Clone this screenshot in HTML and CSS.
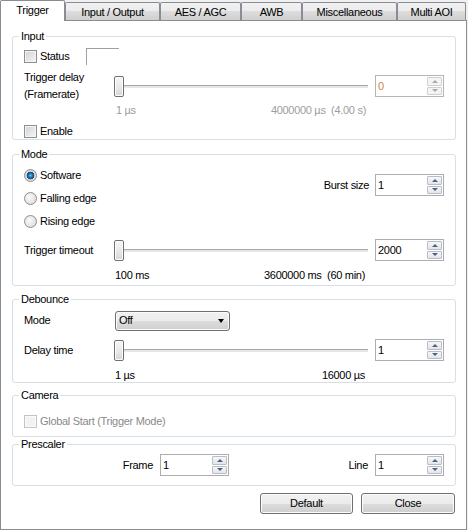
FILE: index.html
```html
<!DOCTYPE html>
<html>
<head>
<meta charset="utf-8">
<link rel="stylesheet" href="styles.css">
</head>
<body>
<div class="tabs">
  <div class="tab sel w65">Trigger</div>
  <div class="tab w95">Input / Output</div>
  <div class="tab w81">AES / AGC</div>
  <div class="tab w61">AWB</div>
  <div class="tab w95">Miscellaneous</div>
  <div class="tab w69">Multi AOI</div>
</div>
<div class="panel">
  <fieldset class="grp">
    <legend>Input</legend>
    <div class="gbody">
      <div class="row r-status">
        <span class="chkl"><span class="chk"></span>Status</span>
        <span class="statusbox"></span>
      </div>
      <div class="row r-trig">
        <div class="lbl two">Trigger delay<br>(Framerate)</div>
        <div class="slider"><span class="thumb"></span><span class="track"></span></div>
        <div class="spin dis"><span class="val">0</span><span class="btns"><span class="up"></span><span class="dn"></span></span></div>
      </div>
      <div class="scale dis"><span>1 µs</span><span>4000000 µs&nbsp; (4.00 s)</span></div>
      <div class="row r-en"><span class="chk"></span>Enable</div>
    </div>
  </fieldset>

  <fieldset class="grp g-mode">
    <legend>Mode</legend>
    <div class="gbody b-mode">
      <div class="mode-top">
        <div class="radios">
          <div class="rad-row"><span class="radio on"></span>Software</div>
          <div class="rad-row"><span class="radio"></span>Falling edge</div>
          <div class="rad-row"><span class="radio"></span>Rising edge</div>
        </div>
        <div class="burst">
          <span>Burst size</span>
          <div class="spin"><span class="val">1</span><span class="btns"><span class="up"></span><span class="dn"></span></span></div>
        </div>
      </div>
      <div class="row r-tt">
        <div class="lbl">Trigger timeout</div>
        <div class="slider"><span class="thumb"></span><span class="track"></span></div>
        <div class="spin"><span class="val">2000</span><span class="btns"><span class="up"></span><span class="dn"></span></span></div>
      </div>
      <div class="scale s-mode"><span>100 ms</span><span>3600000 ms&nbsp; (60 min)</span></div>
    </div>
  </fieldset>

  <fieldset class="grp g-deb">
    <legend>Debounce</legend>
    <div class="gbody">
      <div class="row r-dm">
        <div class="lbl w91">Mode</div>
        <div class="combo"><span>Off</span><span class="arrow"></span></div>
      </div>
      <div class="row r-dt">
        <div class="lbl">Delay time</div>
        <div class="slider"><span class="thumb"></span><span class="track"></span></div>
        <div class="spin"><span class="val">1</span><span class="btns"><span class="up"></span><span class="dn"></span></span></div>
      </div>
      <div class="scale s-deb"><span>1 µs</span><span>16000 µs</span></div>
    </div>
  </fieldset>

  <fieldset class="grp g-cam">
    <legend>Camera</legend>
    <div class="gbody b-cam">
      <div class="row r-cam"><span class="chk dis"></span>Global Start (Trigger Mode)</div>
    </div>
  </fieldset>

  <fieldset class="grp g-pre">
    <legend>Prescaler</legend>
    <div class="b-pre">
      <div class="cell">
        <span>Frame</span>
        <div class="spin"><span class="val">1</span><span class="btns"><span class="up"></span><span class="dn"></span></span></div>
      </div>
      <div class="cell">
        <span>Line</span>
        <div class="spin"><span class="val">1</span><span class="btns"><span class="up"></span><span class="dn"></span></span></div>
      </div>
    </div>
  </fieldset>

  <div class="btnrow">
    <div class="btn b-def">Default</div>
    <div class="btn b-close">Close</div>
  </div>
</div>
</body>
</html>
```
FILE: styles.css
```css
html, body {
  margin: 0;
  padding: 0;
}
body {
  width: 468px;
  height: 530px;
  overflow: hidden;
  background: #f0f0f0;
  font-family: "Liberation Sans", Arial, sans-serif;
  font-size: 11px;
  line-height: 13px;
  letter-spacing: -0.3px;
  color: #000;
}

/* tabs */
.tabs {
  display: flex;
  align-items: flex-end;
  height: 20px;
  position: relative;
  z-index: 1;
}
.tab {
  box-sizing: border-box;
  height: 18px;
  border: 1px solid #898c95;
  border-bottom: none;
  border-radius: 2px 2px 0 0;
  background: linear-gradient(#f2f2f2, #ebebeb 50%, #dddddd 50%, #cfcfcf);
  text-align: center;
  line-height: 18px;
  white-space: nowrap;
}
.tab.sel {
  height: 21px;
  margin-bottom: -1px;
  background: #fff;
  line-height: 19px;
}
.w65 { width: 65px; }
.w95 { width: 95px; }
.w81 { width: 81px; }
.w61 { width: 61px; }
.w69 { width: 69px; }

/* panel */
.panel {
  box-sizing: border-box;
  width: 467px;
  height: 510px;
  border: 1px solid #898c95;
  background: #fff;
  padding: 9px 10px 0 11px;
}

/* group boxes */
.grp {
  margin: 0;
  padding: 0;
  border: 1px solid #d5dfe5;
  border-radius: 3px;
  min-inline-size: 0;
}
.grp legend {
  padding: 0 2px;
  margin-left: 6px;
  line-height: 13px;
}
.gbody {
  padding: 0 11px;
}
.g-mode { margin-top: 8px; }
.g-deb { margin-top: 7px; }
.g-cam { margin-top: 6px; }
.g-pre { margin-top: 1px; }

.row {
  display: flex;
  align-items: center;
}
.lbl {
  width: 90px;
  flex: none;
  white-space: nowrap;
}
.lbl.two { line-height: 17px; }
.lbl.w91 { width: 91px; }

/* checkbox */
.chk {
  box-sizing: border-box;
  flex: none;
  width: 13px;
  height: 13px;
  margin-right: 3px;
  border: 1px solid #8e8f8f;
  background: linear-gradient(135deg, #cfd1d4, #f7f7f7);
  box-shadow: inset 0 0 0 1px #f4f4f4;
}
.chk.dis {
  border-color: #c4c4c4;
  background: #f2f2f2;
  box-shadow: inset 0 0 0 1px #fafafa;
}
.chkl {
  display: flex;
  align-items: center;
  width: 62px;
}
.statusbox {
  box-sizing: border-box;
  width: 33px;
  height: 17px;
  border-top: 1px solid #a0a0a0;
  border-left: 1px solid #a0a0a0;
}

.r-status { margin-top: 4px; height: 18px; }
.r-trig { margin-top: 4px; height: 34px; }
.r-en { margin-top: 6px; height: 16px; }

/* slider */
.slider {
  display: flex;
  align-items: center;
  flex: none;
  width: 254px;
  height: 21px;
}
.thumb {
  box-sizing: border-box;
  flex: none;
  width: 10px;
  height: 21px;
  border: 1px solid #707070;
  border-radius: 2px;
  background: linear-gradient(#f7f7f7, #e6e6e6 60%, #d6d6d6);
  box-shadow: inset 0 0 0 1px #fdfdfd;
}
.track {
  box-sizing: border-box;
  flex: 1;
  height: 3px;
  border-top: 1px solid #a7a7a7;
  background: #e4e8e9;
}

/* spin box */
.spin {
  box-sizing: border-box;
  display: flex;
  flex: none;
  width: 69px;
  height: 22px;
  margin-left: 7px;
  border: 1px solid #abadb3;
  background: #fff;
}
.spin .val {
  flex: 1;
  padding-left: 2px;
  line-height: 20px;
}
.spin.dis { border-color: #b5b5b5; }
.spin.dis .val { color: #c8883c; }
.btns {
  display: flex;
  flex-direction: column;
  gap: 1px;
  width: 15px;
  margin: 1px 1px 1px 0;
}
.btns span {
  box-sizing: border-box;
  flex: 1;
  display: flex;
  align-items: center;
  justify-content: center;
  border: 1px solid #b8bdc6;
  border-radius: 1px;
  background: linear-gradient(#f7f7f7, #e3e5e9);
}
.btns .up::after {
  content: "";
  border-left: 3px solid transparent;
  border-right: 3px solid transparent;
  border-bottom: 3px solid #4d6089;
}
.btns .dn::after {
  content: "";
  border-left: 3px solid transparent;
  border-right: 3px solid transparent;
  border-top: 3px solid #4d6089;
}
.spin.dis .btns span { border-color: #d0d0d0; background: #f4f4f4; }
.spin.dis .btns .up::after { border-bottom-color: #a8a8a8; }
.spin.dis .btns .dn::after { border-top-color: #a8a8a8; }

/* scale labels */
.scale {
  box-sizing: border-box;
  display: flex;
  justify-content: space-between;
  width: 254px;
  height: 14px;
  margin-left: 90px;
  padding: 0 2px 0 2px;
  line-height: 14px;
  white-space: nowrap;
}
.scale.dis { color: #9d9d9d; }
.s-mode { margin-top: 7px; padding-left: 1px; padding-right: 3px; }
.s-deb { margin-top: 8px; height: 13px; line-height: 13px; padding-left: 1px; padding-right: 3px; }

/* mode group */
.b-mode { padding-bottom: 3px; }
.mode-top {
  display: flex;
  justify-content: space-between;
  align-items: flex-start;
  padding-top: 3px;
}
.rad-row {
  display: flex;
  align-items: center;
  height: 23px;
}
.radio {
  box-sizing: border-box;
  flex: none;
  width: 13px;
  height: 13px;
  margin-right: 3px;
  border: 1px solid #8e8f8f;
  border-radius: 50%;
  background: radial-gradient(circle at 40% 40%, #fbfbfb, #e4e4e4 60%, #cfcfcf);
}
.radio.on {
  background: radial-gradient(circle at 50% 50%, #6cc6f2 0, #2b86c6 1.5px, #1a5587 3px, #2a4f74 3.6px, #e8e8e8 4.2px, #d2d2d2 5.5px);
}
.burst {
  display: flex;
  align-items: center;
  margin-top: 10px;
}
.burst .spin { margin-left: 6px; }
.r-tt { margin-top: 6px; height: 22px; }

/* debounce */
.r-dm { margin-top: 4px; height: 21px; }
.r-dt { margin-top: 8px; height: 22px; }
.combo {
  box-sizing: border-box;
  display: flex;
  align-items: center;
  justify-content: space-between;
  width: 115px;
  height: 20px;
  padding: 0 5px 0 3px;
  border: 1px solid #707070;
  border-radius: 3px;
  background: linear-gradient(#f2f2f2, #ebebeb 50%, #dddddd 50%, #cfcfcf);
  box-shadow: inset 0 0 0 1px #fafafa;
}
.arrow {
  border-left: 3.5px solid transparent;
  border-right: 3.5px solid transparent;
  border-top: 4px solid #000;
}

/* camera */
.b-cam { padding-bottom: 7px; }
.r-cam { margin-top: 11px; height: 16px; color: #8a8a8a; }

/* prescaler */
.b-pre {
  display: grid;
  grid-template-columns: 214px 215px;
  padding: 3px 0 9px 2px;
}
.cell {
  display: flex;
  align-items: center;
  justify-content: flex-end;
  height: 22px;
}
.cell .spin { margin-left: 7px; }

/* buttons */
.btnrow {
  display: flex;
  justify-content: flex-end;
  gap: 8px;
  margin-top: 7px;
  padding-right: 1px;
}
.btn {
  box-sizing: border-box;
  height: 21px;
  border: 1px solid #707070;
  border-radius: 3px;
  background: linear-gradient(#f2f2f2, #ebebeb 50%, #dddddd 50%, #cfcfcf);
  box-shadow: inset 0 0 0 1px #fcfcfc;
  text-align: center;
  line-height: 19px;
}
.b-def { width: 93px; }
.b-close { width: 94px; }
```
